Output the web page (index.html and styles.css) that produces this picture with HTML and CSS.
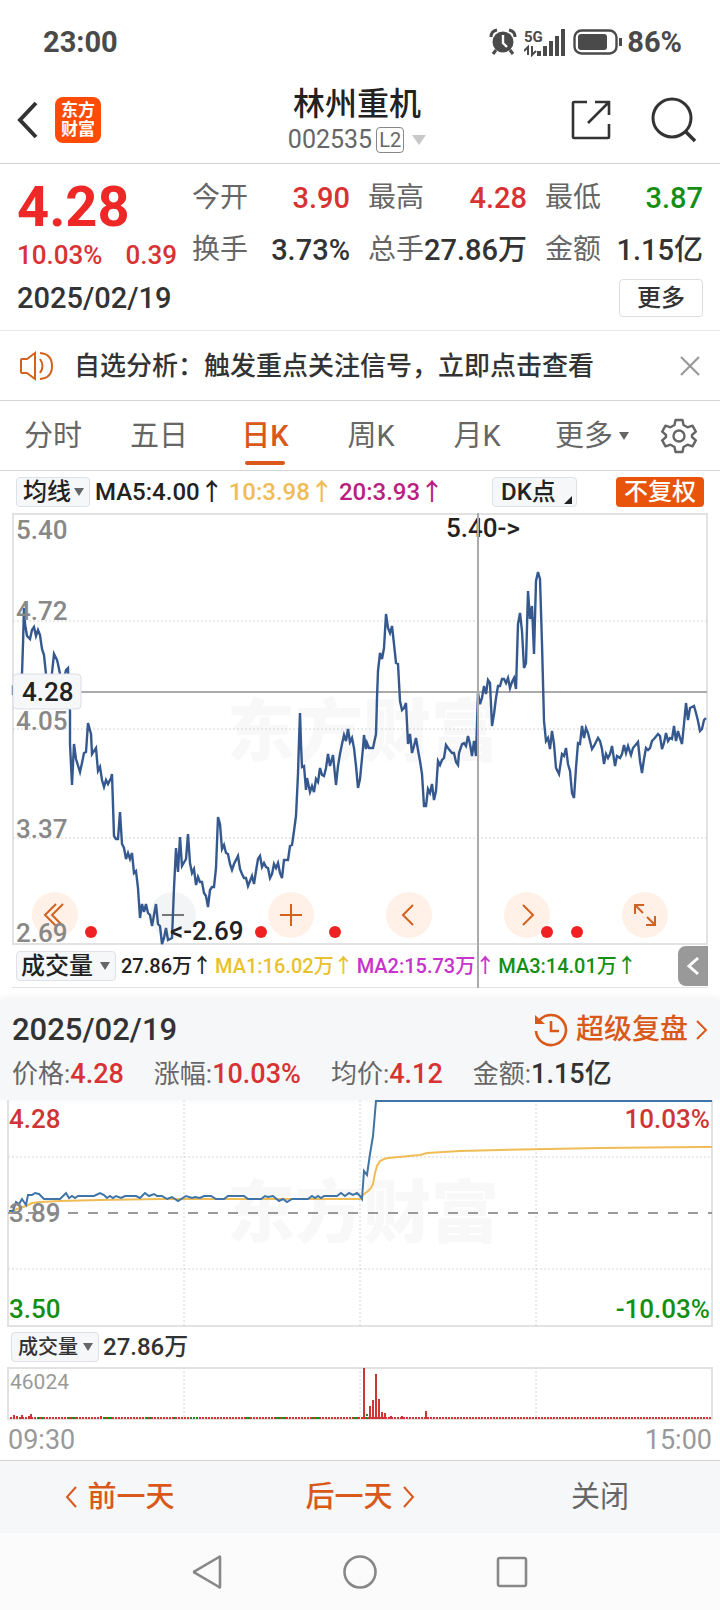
FILE: index.html
```html
<!DOCTYPE html>
<html lang="zh-CN">
<head>
    <meta charset="UTF-8">
    <meta name="viewport" content="width=device-width, initial-scale=1.0">
    <title>林州重机 002535</title>
    <link rel="stylesheet" href="styles.css">
</head>
<body>
<div class="statusbar">
    <span>23:00</span>
    <div class="status-icons">
        <svg width="28" height="28" viewBox="0 0 28 28">
            <circle cx="14" cy="14" r="10.5" fill="#4a4a4a"/>
            <path d="M2 9Q2 3 8 2M26 9Q26 3 20 2M7 22l-3 4M21 22l3 4" fill="none" stroke="#4a4a4a" stroke-width="3"/>
            <path d="M14 7v8l4 4" fill="none" stroke="#fff" stroke-width="2.4"/>
        </svg>
        <svg width="42" height="30" viewBox="0 0 42 30">
            <text x="0" y="15" class="net">5G</text>
            <path d="M4 28v-8l-4 4M8 19v9l4-4" fill="none" stroke="#4a4a4a" stroke-width="2"/>
            <path d="M15 29v-5M21 29v-10M27 29v-15M33 29v-20M39 29V2" stroke="#4a4a4a" stroke-width="4"/>
        </svg>
        <svg width="50" height="26" viewBox="0 0 50 26">
            <rect x="1.5" y="1.5" width="42" height="23" rx="7" fill="none" stroke="#4a4a4a" stroke-width="2.4"/>
            <rect x="5" y="5" width="29" height="16" rx="3" fill="#4a4a4a"/>
            <path d="M47.500 9v8" stroke="#4a4a4a" stroke-width="3"/>
        </svg>
        <span>86%</span>
    </div>
</div>

<header class="header">
    <div class="header-left">
        <button class="icon-btn" aria-label="返回">
            <svg width="22" height="38" viewBox="0 0 22 38"><path d="M19 2L3 19l16 17" fill="none" stroke="#333" stroke-width="4"/></svg>
        </button>
        <a class="logo" href="#">东方<br>财富</a>
    </div>
    <div class="header-title">
        <h1>林州重机</h1>
        <div class="code">002535<span class="level">L2</span><span class="tri"></span></div>
    </div>
    <div class="header-right">
        <button class="icon-btn" aria-label="分享">
            <svg width="40" height="40" viewBox="0 0 40 40"><path d="M16 2H3q-1 0-1 1v34q0 1 1 1h34q1 0 1-1V24M24 2h14v13M38 2L17 23" fill="none" stroke="#333" stroke-width="2.6"/></svg>
        </button>
        <button class="icon-btn" aria-label="搜索">
            <svg width="46" height="46" viewBox="0 0 46 46"><circle cx="21" cy="21" r="19" fill="none" stroke="#333" stroke-width="3"/><path d="M34 34l10 10" stroke="#333" stroke-width="3.500"/></svg>
        </button>
    </div>
</header>

<section class="quote">
    <div class="quote-price">
        <div class="price">4.28</div>
        <div class="change"><span>10.03%</span><span>0.39</span></div>
    </div>
    <dl class="quote-grid">
        <div><dt>今开</dt><dd class="up">3.90</dd></div>
        <div><dt>最高</dt><dd class="up">4.28</dd></div>
        <div><dt>最低</dt><dd class="down">3.87</dd></div>
        <div><dt>换手</dt><dd>3.73%</dd></div>
        <div><dt>总手</dt><dd>27.86万</dd></div>
        <div><dt>金额</dt><dd>1.15亿</dd></div>
    </dl>
    <div class="quote-foot">
        <span class="date">2025/02/19</span>
        <button class="more-btn">更多</button>
    </div>
</section>

<section class="notice">
    <svg width="34" height="30" viewBox="0 0 34 30"><path d="M15 2L7 8H2q-1 0-1 1v12q0 1 1 1h5l8 6zM20 8q5 7 0 14M20 2q12 1 12 13T20 28" fill="none" stroke="#d4621f" stroke-width="2"/></svg>
    <a href="#">自选分析：触发重点关注信号，立即点击查看</a>
    <button class="icon-btn" aria-label="关闭提示">
        <svg width="20" height="20" viewBox="0 0 20 20"><path d="M1 1l18 18M19 1L1 19" stroke="#999" stroke-width="2.2"/></svg>
    </button>
</section>

<nav class="tabs">
    <button>分时</button>
    <button>五日</button>
    <button class="active">日K</button>
    <button>周K</button>
    <button>月K</button>
    <button>更多<span class="tri dark"></span></button>
    <button aria-label="设置">
        <svg width="36" height="36" viewBox="0 0 36 36" fill="none" stroke="#666" stroke-width="2.4" stroke-linejoin="round"><path d="M14.500 2h7l1 5 4 2.300 5-1.700 3.300 6-3.800 3.400v2l3.800 3.400-3.300 6-5-1.700-4 2.300-1 5h-7l-1-5-4-2.300-5 1.700-3.300-6 3.800-3.400v-2L1.200 13.600l3.300-6 5 1.700 4-2.300z"/><circle cx="18" cy="18" r="5.500"/></svg>
    </button>
</nav>

<div class="indicators">
    <label class="pick"><select aria-label="均线"><option>均线</option></select></label>
    <span class="ma">MA5:4.00↑</span>
    <span class="ma yellow">10:3.98↑</span>
    <span class="ma magenta">20:3.93↑</span>
    <label class="pick corner"><select aria-label="DK点"><option>DK点</option></select></label>
    <button class="adjust">不复权</button>
</div>

<section class="kline">
    <div class="kline-plot">
        <div class="tools">
            <button aria-label="最早"><svg viewBox="0 0 24 24"><path d="M13 1L2 12l11 11M20 1L9 12l11 11"/></svg></button>
            <button class="off" aria-label="缩小"><svg viewBox="0 0 24 24"><path d="M1 12h22"/></svg></button>
            <button aria-label="放大"><svg viewBox="0 0 24 24"><path d="M1 12h22M12 1v22"/></svg></button>
            <button aria-label="左移"><svg viewBox="0 0 24 24"><path d="M16 2L6 12l10 10"/></svg></button>
            <button aria-label="右移"><svg viewBox="0 0 24 24"><path d="M8 2l10 10L8 22"/></svg></button>
            <button aria-label="全屏"><svg viewBox="0 0 24 24"><path d="M2 11V2h9M2 2l8 8M22 13v9h-9M22 22l-8-8"/></svg></button>
        </div>
        <svg class="plot" viewBox="0 0 720 432">
            <text x="363" y="243" class="watermark">东方财富</text>
            <rect x="13" y="1" width="694" height="430" fill="none" stroke="#e2e2e2" stroke-width="2"/>
            <path d="M13 108h694M13 216h694M13 325h694" class="dotted"/>
            <path d="M13 179h694" stroke="#aaa" stroke-width="2"/>
            <polyline class="price-line" points="13,182 13,174 20,178 22,161 23,131 24,95 25,111 27,123 28,124 30,126 32,117 34,114 36,123 38,117 40,122 42,136 44,142 46,161 48,178 51,171 52,160 54,141 57,147 58,151 60,161 63,171 66,157 68,155 69,185 70,198 70,231
                72,272 74,231 76,246 80,259 82,250 84,240 86,239 88,210 91,221 92,241 96,235 98,258 100,254 102,267 104,274 106,267 108,271 111,265 112,261 114,323 116,326 118,326 120,299 122,331 124,335 126,346 128,340 130,346 132,340 134,360 136,358 138,375 140,405
                142,391 144,399 146,391 148,400 150,402 152,413 156,391 158,411 160,413 162,431 164,425 166,415 168,427 172,425 174,375 176,335 178,359 180,324 182,353 186,346 188,321 190,350 192,360 194,356 196,372 198,364 200,369 202,369 204,380 206,383 208,394
                210,377 212,374 214,374 216,355 218,304 220,311 222,336 224,332 226,340 228,341 230,351 232,357 234,351 238,343 240,356 242,361 244,365 246,365 248,373 252,363 254,371 256,358 258,346 260,343 262,354 264,350 266,354 268,355 270,365 272,361 274,351
                276,355 278,350 280,360 282,365 284,347 288,347 290,333 292,332 294,318 296,303 298,261 299,228 300,200 301,231 302,254 304,253 306,277 307,265 310,279 312,273 314,279 316,266 318,269 320,255 322,262 324,263 326,255 328,241 330,253 333,242 336,272
                338,253 340,241 342,231 344,222 346,228 348,216 350,229 352,225 354,235 356,253 358,275 360,266 363,235 364,222 366,236 367,230 369,235 373,235 376,221 377,185 378,158 380,140 382,146 384,135 386,101 388,115 390,120 392,113 394,131 396,150 398,151
                400,188 402,197 404,195 406,190 408,231 410,221 412,240 414,233 416,225 418,237 420,248 422,261 424,293 426,293 428,276 430,280 432,271 434,287 436,278 438,248 440,252 442,247 444,245 446,232 448,235 452,240 454,240 456,249 458,252 459,240 462,231
                464,230 466,233 468,223 470,231 472,243 474,228 476,243 478,180 480,191 482,185 484,173 486,181 488,167 490,170 492,213 494,201 496,185 498,173 500,173 502,166 504,166 506,170 508,165 510,175 512,169 514,165 516,176 518,111 520,100 522,118 524,155
                526,150 528,78 530,106 532,93 534,141 536,68 538,59 540,66 542,131 544,208 546,228 548,225 550,236 552,218 554,231 556,255 559,261 562,241 564,243 566,235 568,251 570,258 572,280 574,285 576,255 578,230 580,231 582,213 584,225 586,215 588,220 592,236
                594,233 598,225 600,228 602,236 604,251 606,241 608,245 610,241 612,233 615,253 617,243 620,245 622,241 624,232 626,240 628,233 631,242 633,235 638,229 640,248 642,260 644,246 646,235 648,237 650,235 652,228 654,226 658,221 660,223 662,236 664,230
                666,220 668,228 670,225 672,226 674,213 676,228 678,218 680,225 682,231 684,211 686,190 688,207 690,195 694,193 696,200 698,208 700,218 702,216 704,207 706,205"/>
            <g class="axis">
                <text x="16" y="26">5.40</text>
                <text x="16" y="107">4.72</text>
                <text x="16" y="217">4.05</text>
                <text x="16" y="325">3.37</text>
                <text x="16" y="429">2.69</text>
            </g>
            <g class="axis mark">
                <text x="446" y="24">5.40-&gt;</text>
                <text x="170" y="427">&lt;-2.69</text>
            </g>
            <rect x="13" y="161" width="68" height="35" rx="4" fill="#f6f7f9" stroke="#dcdde6"/>
            <text x="22" y="188" class="axis mark">4.28</text>
            <g fill="#ee2222">
                <circle cx="91" cy="419" r="6"/>
                <circle cx="261" cy="419" r="6"/>
                <circle cx="335" cy="419" r="6"/>
                <circle cx="547" cy="419" r="6"/>
                <circle cx="577" cy="419" r="6"/>
            </g>
        </svg>
    </div>
    <div class="vol-legend">
        <label class="pick wide"><select aria-label="成交量"><option>成交量</option></select></label>
        <span>27.86万↑</span>
        <span class="gold">MA1:16.02万↑</span>
        <span class="purple">MA2:15.73万↑</span>
        <span class="down">MA3:14.01万↑</span>
        <button class="collapse" aria-label="收起"><svg width="14" height="20" viewBox="0 0 14 20"><path d="M12 2L3 10l9 8" fill="none" stroke="#fff" stroke-width="3"/></svg></button>
    </div>
    <div class="crosshair"></div>
</section>

<section class="detail">
    <div class="detail-head">
        <span class="detail-date">2025/02/19</span>
        <a class="replay" href="#">
            <svg width="34" height="34" viewBox="0 0 34 34" fill="none" stroke="#d9591a" stroke-width="2.600"><path d="M5 8A15 15 0 1 1 2 18M17 8v10h8"/><path d="M1 2v9h10z" fill="#d9591a" stroke="none"/></svg>
            超级复盘
            <svg width="12" height="22" viewBox="0 0 12 22"><path d="M1 2l9 9-9 9" fill="none" stroke="#d9591a" stroke-width="2"/></svg>
        </a>
    </div>
    <div class="detail-stats">
        <span>价格:<b>4.28</b></span>
        <span>涨幅:<b>10.03%</b></span>
        <span>均价:<b>4.12</b></span>
        <span>金额:<b class="plain">1.15亿</b></span>
    </div>
</section>

<section class="intraday">
    <svg class="plot" viewBox="0 0 720 227">
        <text x="363" y="137" class="watermark">东方财富</text>
        <path d="M8 0v226h704V0" fill="none" stroke="#e2e2e2" stroke-width="2"/>
        <path d="M8 57h704M8 169h704M184 0v226M360 0v226M536 0v226" class="dotted"/>
        <path d="M8 113h704" stroke="#999" stroke-width="2" stroke-dasharray="10 10"/>
        <polyline class="avg-line" points="9,112 20,108 26,106 32,103 40,102 60,101 100,100 160,99 360,99 363,95 368,91 371,88 373,84 375,73 377,66 380,61 384,59 388,58 420,55 427,53 460,51 500,50 600,48 700,47 712,47"/>
        <polyline class="day-line" points="9,111 13,111 16,102 19,104 22,99 26,105 28,95 32,95 35,93 39,94 44,99 60,99 66,93 69,98 72,96 75,98 78,96 94,96 100,93 104,95 107,98 110,96 113,98 116,96 121,98 125,96 136,96 140,98 145,93 149,96 154,94 157,96 162,96 167,99 172,97 178,101 186,96 192,98 195,97 200,98 204,96 211,96 216,99 224,99 228,96 244,96 248,99 261,99 265,96 268,97 273,96 279,101 283,99 287,102 292,99 308,99 312,96 315,98 318,96 321,98 324,96 337,96 341,93 345,96 349,93 353,95 357,93 360,96 362,99 364,71 367,75 370,54 373,36 376,1 712,1"/>
        <g class="axis">
            <text x="9" y="28" class="t-up">4.28</text>
            <text x="9" y="122">3.89</text>
            <text x="9" y="218" class="t-down">3.50</text>
            <text x="710" y="28" class="t-up end">10.03%</text>
            <text x="710" y="218" class="t-down end">-10.03%</text>
        </g>
    </svg>
    <div class="vol-head">
        <label class="pick small"><select aria-label="分时成交量"><option>成交量</option></select></label>
        <span>27.86万</span>
    </div>
    <svg class="plot" viewBox="0 0 720 54">
        <rect x="8" y="1" width="704" height="51" fill="none" stroke="#e2e2e2" stroke-width="2"/>
        <path d="M184 0v52M360 0v52M536 0v52" class="dotted"/>
        <path d="M10 51h702" class="bars"/>
        <path d="M38 51h6M68 51h9M104 51h9M146 51h6M190 51h9M245 51h6M275 51h12M312 51h9M353 51h6M174 52v-3M367 52v-6" class="bars green"/>
        <path d="M14 52v-4M17 52v-3M22 52v-4M29 52v-3M31 52v-5M101 52v-3M364 52V1M370 52V39M373 52V33M376 52V7M379 52V32M382 52V45M385 52V46M391 52v-3M402 52v-3M426 52v-8" stroke="#cf3535" stroke-width="2"/>
        <text x="10" y="22" class="vol-max">46024</text>
    </svg>
    <div class="times"><span>09:30</span><span>15:00</span></div>
</section>

<footer class="day-nav">
    <button><svg width="12" height="22" viewBox="0 0 12 22"><path d="M11 1L2 11l9 10" fill="none" stroke="#d9591a" stroke-width="2"/></svg>前一天</button>
    <button>后一天<svg width="12" height="22" viewBox="0 0 12 22"><path d="M1 1l9 10-9 10" fill="none" stroke="#d9591a" stroke-width="2"/></svg></button>
    <button class="close">关闭</button>
</footer>

<nav class="system-nav">
    <button class="icon-btn" aria-label="后退"><svg width="34" height="34" viewBox="0 0 34 34"><path d="M29 2v30q0 1-1 0L4 18q-2-1 0-2L28 2q1-1 1 0z"/></svg></button>
    <button class="icon-btn" aria-label="主页"><svg width="34" height="34" viewBox="0 0 34 34"><circle cx="17" cy="17" r="15.500"/></svg></button>
    <button class="icon-btn" aria-label="最近任务"><svg width="34" height="34" viewBox="0 0 34 34"><rect x="3" y="3" width="28" height="28" rx="2"/></svg></button>
</nav>
</body>
</html>
```
FILE: styles.css
```css
* {
    box-sizing: border-box;
}
body {
    margin: 0;
    background: #fff;
    color: #333;
    font-family: Roboto, "Noto Sans CJK SC", sans-serif;
    font-size: 26px;
    line-height: 32px;
}
button, select {
    font: inherit;
    color: inherit;
    background: none;
    border: none;
    padding: 0;
    margin: 0;
    cursor: pointer;
}
a {
    color: inherit;
    text-decoration: none;
}
svg {
    display: block;
    flex: none;
}
.icon-btn {
    display: flex;
}
.up {
    color: #d73333;
}
.down {
    color: #148f14;
}
.yellow {
    color: #efbc55;
}
.magenta {
    color: #b81f80;
}
.gold {
    color: #e8c22e;
}
.purple {
    color: #c733cc;
}
.tri {
    border: 7px solid transparent;
    border-top: 10px solid #c8c8c8;
    border-bottom: none;
}
.tri.dark {
    border-width: 8px 5px 0;
    border-top-color: #666;
}

/* status bar and header */
.statusbar {
    display: flex;
    justify-content: space-between;
    align-items: center;
    height: 84px;
    padding: 0 38px 0 43px;
    font-size: 29px;
    font-weight: 700;
    color: #4a4a4a;
}
.status-icons {
    display: flex;
    align-items: center;
    gap: 7px;
}
.status-icons span {
    margin-left: -3px;
}
.net {
    font-size: 15px;
    font-weight: 700;
    fill: #4a4a4a;
}
.header {
    display: grid;
    grid-template-columns: 1fr auto 1fr;
    align-items: center;
    height: 80px;
    padding: 0 23px 10px 17px;
    border-bottom: 1px solid #d4d4d4;
}
.header-left, .header-right {
    display: flex;
    align-items: center;
    gap: 16px;
}
.header-right {
    justify-content: flex-end;
    gap: 40px;
}
.logo {
    width: 46px;
    height: 46px;
    padding: 4px 0;
    border-radius: 8px;
    background: #ff4b05;
    color: #fff;
    font-size: 17px;
    font-weight: 700;
    line-height: 19px;
    text-align: center;
}
.header-title {
    text-align: center;
}
h1 {
    margin: 0;
    font-size: 32px;
    font-weight: 500;
    line-height: 40px;
    color: #222;
}
.code {
    display: flex;
    align-items: center;
    justify-content: center;
    gap: 4px;
    font-size: 25px;
    color: #666;
}
.level {
    padding: 0 2px;
    border: 1px solid #888;
    border-radius: 4px;
    font-size: 20px;
    line-height: 24px;
}
.code .tri {
    margin-left: 4px;
}

/* quote */
.quote {
    display: grid;
    grid-template-columns: 160px 1fr;
    column-gap: 15px;
    padding: 10px 17px 13px 17px;
    border-bottom: 1px solid #e8e8e8;
}
.price {
    height: 65px;
    font-size: 56px;
    font-weight: 700;
    line-height: 66px;
    color: #ee2727;
}
.change {
    display: flex;
    justify-content: space-between;
    font-weight: 500;
    color: #d73333;
}
.quote-grid {
    display: grid;
    grid-template-columns: repeat(3, 1fr);
    column-gap: 18px;
    row-gap: 10px;
    margin: 4px 0 0;
    font-size: 28px;
    line-height: 40px;
}
.quote-grid div {
    display: flex;
    justify-content: space-between;
    white-space: nowrap;
}
.quote-grid dt {
    color: #666;
}
.quote-grid dd {
    margin: 0;
    font-size: 29px;
    font-weight: 500;
}
.quote-foot {
    grid-column: 1 / 3;
    display: flex;
    justify-content: space-between;
    align-items: center;
    margin-top: 8px;
    font-size: 29px;
    font-weight: 500;
}
.more-btn {
    width: 84px;
    height: 38px;
    border: 1px solid #ddd;
    border-radius: 4px;
    font-size: 24px;
    line-height: 32px;
}

/* notice */
.notice {
    display: flex;
    align-items: center;
    gap: 20px;
    height: 70px;
    padding: 0 20px;
    border-bottom: 1px solid #d4d4d4;
}
.notice a {
    flex: 1;
    font-weight: 500;
}

/* period tabs */
.tabs {
    display: grid;
    grid-template-columns: repeat(5, 106fr) 124fr 50fr;
    height: 70px;
    padding-right: 16px;
    border-bottom: 1px solid #d4d4d4;
    font-size: 29px;
    color: #666;
}
.tabs button {
    position: relative;
    display: flex;
    align-items: center;
    justify-content: center;
    gap: 6px;
}
.tabs .active {
    color: #d9591a;
    font-weight: 500;
}
.tabs .active::after {
    content: "";
    position: absolute;
    bottom: 5px;
    width: 40px;
    height: 4px;
    border-radius: 2px;
    background: #d9591a;
}

/* indicator row */
.indicators {
    display: flex;
    align-items: center;
    gap: 5px;
    height: 42px;
    padding: 0 16px;
    font-size: 24px;
    color: #222;
}
.ma {
    font-weight: 500;
}
.pick {
    position: relative;
    display: flex;
}
.pick select {
    appearance: none;
    height: 30px;
    padding: 0 18px 0 6px;
    border: 1px solid #dfe1e8;
    border-radius: 4px;
    background: #f6f7f9;
    font-weight: 500;
    line-height: 28px;
}
.pick::after {
    content: "";
    position: absolute;
    right: 6px;
    top: 11px;
    border: 5px solid transparent;
    border-top: 8px solid #666;
    border-bottom: none;
    pointer-events: none;
}
.pick.wide select {
    padding: 0 22px 0 4px;
}
.pick.small select {
    padding-right: 20px;
    font-size: 20px;
}
.pick.corner {
    margin-left: auto;
}
.pick.corner select {
    padding: 0 20px 0 8px;
}
.pick.corner::after {
    right: 5px;
    top: 19px;
    border: none;
    border-left: 8px solid transparent;
    border-bottom: 8px solid #222;
}
.adjust {
    width: 88px;
    height: 30px;
    margin-left: 34px;
    border-radius: 4px;
    background: #e8540a;
    color: #fff;
    font-weight: 500;
    line-height: 30px;
}

/* k-line chart */
.kline {
    position: relative;
}
.kline-plot {
    position: relative;
}
.plot {
    position: relative;
    width: 100%;
    height: auto;
    overflow: visible;
    pointer-events: none;
}
.watermark {
    font-size: 68px;
    font-weight: 900;
    fill: #f8f8f8;
    text-anchor: middle;
}
.dotted {
    fill: none;
    stroke: #d4d4d4;
    stroke-dasharray: 2 2;
}
.price-line {
    fill: none;
    stroke: #35598f;
    stroke-width: 2.4;
}
.axis {
    font-size: 26px;
    font-weight: 500;
    fill: #888;
}
.mark {
    fill: #222;
}
.t-up {
    fill: #cf3535;
}
.t-down {
    fill: #148f14;
}
.end {
    text-anchor: end;
}
.tools {
    position: absolute;
    left: 32px;
    right: 52px;
    bottom: 7px;
    display: flex;
    justify-content: space-between;
}
.tools button {
    display: flex;
    align-items: center;
    justify-content: center;
    width: 46px;
    height: 46px;
    border-radius: 50%;
    background: #fff0e8;
}
.tools .off {
    background: #f3f4f5;
}
.tools svg {
    width: 24px;
    height: 24px;
    fill: none;
    stroke: #d4621f;
    stroke-width: 2;
}
.tools .off svg {
    stroke: #777;
}
.vol-legend {
    display: flex;
    align-items: center;
    gap: 3px;
    height: 43px;
    margin: 0 12px;
    padding-left: 4px;
    border-bottom: 1px solid #e2e2e2;
    font-size: 20px;
    font-weight: 500;
    color: #222;
    white-space: nowrap;
}
.vol-legend .pick {
    font-size: 24px;
    margin-right: 2px;
}
.collapse {
    display: flex;
    align-items: center;
    justify-content: center;
    width: 30px;
    height: 40px;
    margin-left: auto;
    border-radius: 8px 0 0 8px;
    background: #999;
}
.crosshair {
    position: absolute;
    top: 0;
    bottom: 0;
    left: 66.3%;
    width: 2px;
    background: #aaa;
}

/* selected day */
.detail {
    margin-top: 12px;
    padding: 8px 12px;
    background: #f6f7f9;
    box-shadow: 0 -2px 8px rgba(0, 0, 0, 0.06);
}
.detail-head {
    display: flex;
    justify-content: space-between;
    align-items: center;
    height: 44px;
}
.detail-date {
    font-size: 31px;
    font-weight: 500;
}
.replay {
    display: flex;
    align-items: center;
    gap: 8px;
    font-size: 28px;
    font-weight: 500;
    color: #d9591a;
}
.detail-stats {
    display: flex;
    gap: 30px;
    height: 40px;
    line-height: 44px;
    color: #666;
}
.detail-stats b {
    font-size: 27px;
    font-weight: 500;
    color: #d73333;
}
.detail-stats .plain {
    color: #333;
}

/* intraday chart */
.avg-line, .day-line {
    fill: none;
    stroke: #efbc55;
    stroke-width: 2;
}
.day-line {
    stroke: #3f74a8;
}
.vol-head {
    display: flex;
    align-items: center;
    gap: 4px;
    height: 40px;
    padding-left: 11px;
    font-size: 24px;
    font-weight: 500;
}
.vol-max {
    font-size: 21px;
    fill: #999;
}
.bars {
    stroke: #cf3535;
    stroke-width: 2;
    stroke-dasharray: 2 1;
}
.bars.green {
    stroke: #148f14;
}
.times {
    display: flex;
    justify-content: space-between;
    height: 39px;
    padding: 0 8px;
    font-size: 27px;
    line-height: 38px;
    color: #999;
}

/* bottom bars */
.day-nav {
    display: grid;
    grid-template-columns: repeat(3, 1fr);
    height: 73px;
    border-top: 1px solid #d4d4d4;
    background: #f6f7f9;
    font-size: 29px;
    font-weight: 500;
    color: #d9591a;
}
.day-nav button {
    display: flex;
    align-items: center;
    justify-content: center;
    gap: 10px;
}
.day-nav .close {
    font-weight: 400;
    color: #666;
}
.system-nav {
    display: flex;
    align-items: center;
    justify-content: center;
    gap: 118px;
    height: 78px;
    background: #fbfbfb;
}
.system-nav svg {
    fill: none;
    stroke: #888;
    stroke-width: 2.6;
}
```
